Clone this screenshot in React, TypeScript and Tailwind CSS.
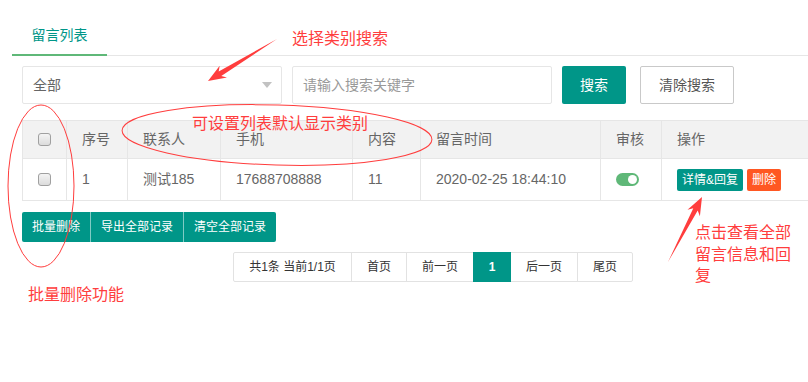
import React from "react";

const RED = "#ff3d3d";

function arrowPoints(x1: number, y1: number, x2: number, y2: number) {
    const dx = x2 - x1;
    const dy = y2 - y1;
    const L = Math.sqrt(dx * dx + dy * dy);
    const ux = dx / L;
    const uy = dy / L;
    const nx = -uy;
    const ny = ux;
    const local: [number, number][] = [
        [0, 0],
        [L - 14, 2.5],
        [L - 18, 7],
        [L, 0],
        [L - 18, -7],
        [L - 14, -2.5],
    ];
    return local
        .map(([a, b]) => `${(x1 + ux * a + nx * b).toFixed(1)},${(y1 + uy * a + ny * b).toFixed(1)}`)
        .join(" ");
}

function Checkbox() {
    return (
        <div className="mx-auto h-[13px] w-[13px] rounded-[3px] border border-[#a0a0a0] bg-gradient-to-b from-[#f4f4f4] to-[#dcdcdc]" />
    );
}

const headers = ["序号", "联系人", "手机", "内容", "留言时间", "审核", "操作"];

export default function App() {
    return (
        <div className="relative h-[382px] w-[808px] overflow-hidden bg-white font-['Liberation_Sans','Noto_Sans_CJK_SC',sans-serif]">
            <div className="w-[843px] pl-3 pt-[15px]">
                {/* tab title */}
                <div className="flex h-[41px] border-b border-[#e6e6e6]">
                    <div className="relative w-[95px] text-center text-[14px] leading-10 text-[#009688]">
                        留言列表
                        <div className="absolute bottom-[-1px] left-0 h-[2px] w-full bg-[#5fb878]" />
                    </div>
                </div>

                <div className="w-[831px] px-[10px] pt-[10px]">
                    {/* search form */}
                    <div className="flex h-[38px] items-center">
                        <div className="flex h-[38px] w-[260px] items-center justify-between rounded-[2px] border border-[#e6e6e6] pl-[10px] pr-[9px] text-[14px] text-[#666]">
                            <span>全部</span>
                            <span className="h-0 w-0 border-x-[5px] border-t-[6px] border-x-transparent border-t-[#c2c2c2]" />
                        </div>
                        <div className="ml-[10px] flex h-[38px] w-[260px] items-center rounded-[2px] border border-[#e6e6e6] pl-[10px] text-[14px] text-[#999]">
                            请输入搜索关键字
                        </div>
                        <button className="ml-[10px] h-[38px] w-[64px] rounded-[2px] bg-[#009688] text-[14px] text-white">
                            搜索
                        </button>
                        <button className="ml-[14px] h-[38px] w-[94px] rounded-[2px] border border-[#c9c9c9] bg-white text-[14px] text-[#555]">
                            清除搜索
                        </button>
                    </div>

                    {/* table */}
                    <table className="mt-4 w-full table-fixed border-collapse text-[14px] text-[#666]">
                        <colgroup>
                            <col className="w-[44px]" />
                            <col className="w-[61px]" />
                            <col className="w-[93px]" />
                            <col className="w-[132px]" />
                            <col className="w-[68px]" />
                            <col className="w-[180px]" />
                            <col className="w-[61px]" />
                            <col />
                        </colgroup>
                        <thead>
                            <tr className="h-[38px] bg-[#f2f2f2]">
                                <th className="border border-[#e6e6e6] font-normal">
                                    <Checkbox />
                                </th>
                                {headers.map((h) => (
                                    <th key={h} className="border border-[#e6e6e6] px-[15px] text-left font-normal">
                                        {h}
                                    </th>
                                ))}
                            </tr>
                        </thead>
                        <tbody>
                            <tr className="h-[42px]">
                                <td className="border border-[#e6e6e6]">
                                    <Checkbox />
                                </td>
                                <td className="border border-[#e6e6e6] px-[15px]">1</td>
                                <td className="border border-[#e6e6e6] px-[15px]">测试185</td>
                                <td className="border border-[#e6e6e6] px-[15px]">17688708888</td>
                                <td className="border border-[#e6e6e6] px-[15px]">11</td>
                                <td className="border border-[#e6e6e6] px-[15px]">2020-02-25 18:44:10</td>
                                <td className="border border-[#e6e6e6] px-[15px]">
                                    <div className="flex h-[13px] w-[23px] items-center justify-end rounded-full bg-[#5fb878] pr-[2px]">
                                        <div className="h-[9px] w-[9px] rounded-full bg-white" />
                                    </div>
                                </td>
                                <td className="border border-[#e6e6e6] px-[15px]">
                                    <div className="flex gap-1">
                                        <span className="h-[22px] rounded-[2px] bg-[#009688] px-[5px] text-[12px] leading-[22px] text-white">
                                            详情&amp;回复
                                        </span>
                                        <span className="h-[22px] rounded-[2px] bg-[#ff5722] px-[5px] text-[12px] leading-[22px] text-white">
                                            删除
                                        </span>
                                    </div>
                                </td>
                            </tr>
                        </tbody>
                    </table>

                    {/* batch buttons */}
                    <div className="mt-[11px] flex">
                        <button className="h-[30px] rounded-l-[2px] bg-[#009688] px-[10px] text-[12px] text-white">批量删除</button>
                        <button className="h-[30px] border-l border-white/50 bg-[#009688] px-[10px] text-[12px] text-white">导出全部记录</button>
                        <button className="h-[30px] rounded-r-[2px] border-l border-white/50 bg-[#009688] px-[10px] text-[12px] text-white">清空全部记录</button>
                    </div>

                    {/* pager */}
                    <div className="mt-[10px] flex justify-center pl-[11px] text-[12px] text-[#333]">
                        <span className="flex h-[30px] w-[119px] items-center justify-center rounded-l-[2px] border border-[#e2e2e2]">共1条 当前1/1页</span>
                        <span className="-ml-px flex h-[30px] w-[56px] items-center justify-center border border-[#e2e2e2]">首页</span>
                        <span className="-ml-px flex h-[30px] w-[68px] items-center justify-center border border-[#e2e2e2]">前一页</span>
                        <span className="relative -ml-px flex h-[30px] w-[38px] items-center justify-center border border-[#009688] bg-[#009688] font-bold text-white">1</span>
                        <span className="-ml-px flex h-[30px] w-[68px] items-center justify-center border border-[#e2e2e2]">后一页</span>
                        <span className="-ml-px flex h-[30px] w-[56px] items-center justify-center rounded-r-[2px] border border-[#e2e2e2]">尾页</span>
                    </div>
                </div>
            </div>

            {/* annotations */}
            <svg className="pointer-events-none absolute inset-0" width="808" height="382">
                <ellipse cx="277" cy="135" rx="155" ry="30" fill="none" stroke={RED} strokeWidth="1" transform="rotate(1.7 277 135)" />
                <ellipse cx="41" cy="186" rx="33" ry="81" fill="none" stroke={RED} strokeWidth="1" />
                <polygon points={arrowPoints(277, 39, 208, 81)} fill={RED} />
                <polygon points={arrowPoints(668, 262, 702, 197)} fill={RED} />
            </svg>
            <span className="absolute left-[292px] top-[26px] font-['Noto_Sans_CJK_SC',sans-serif] text-[16px] leading-[22px] text-[#ff3d3d]">选择类别搜索</span>
            <span className="absolute left-[192px] top-[111px] font-['Noto_Sans_CJK_SC',sans-serif] text-[16px] leading-[22px] text-[#ff3d3d]">可设置列表默认显示类别</span>
            <span className="absolute left-[28px] top-[282px] font-['Noto_Sans_CJK_SC',sans-serif] text-[16px] leading-[22px] text-[#ff3d3d]">批量删除功能</span>
            <div className="absolute left-[695px] top-[221px] w-[100px] font-['Noto_Sans_CJK_SC',sans-serif] text-[16px] leading-[21.5px] text-[#ff3d3d]">
                点击查看全部
                <br />
                留言信息和回
                <br />
                复
            </div>
        </div>
    );
}
